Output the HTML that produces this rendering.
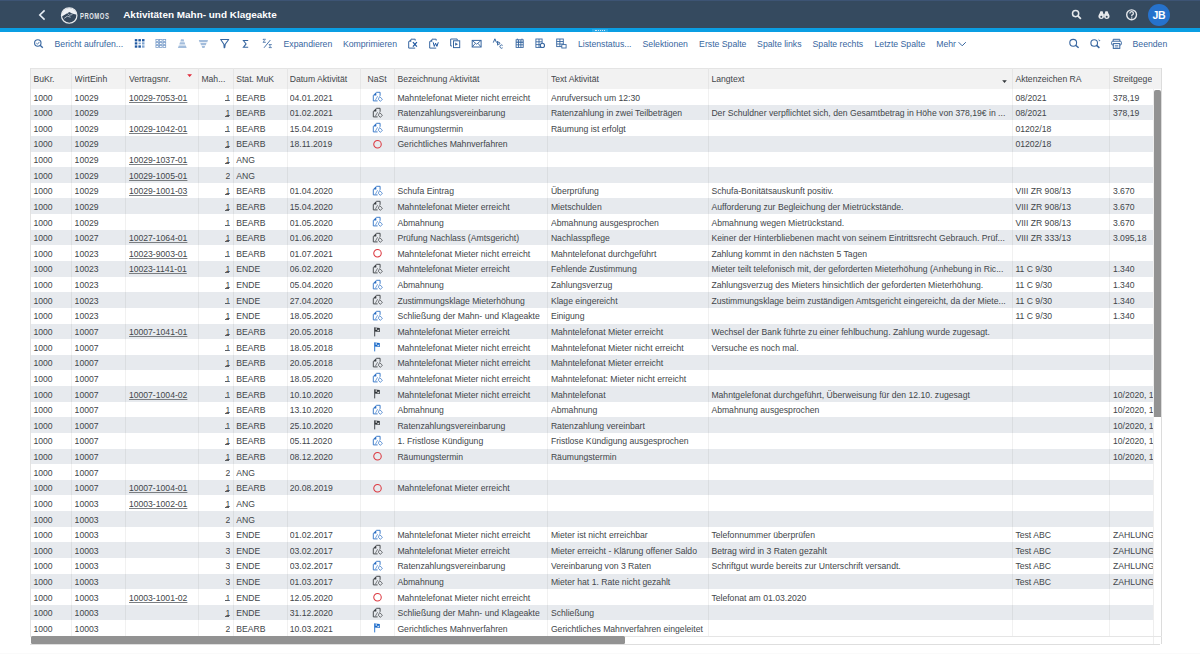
<!DOCTYPE html>
<html><head><meta charset="utf-8"><style>
*{box-sizing:border-box}
html,body{margin:0;padding:0;width:1200px;height:654px;overflow:hidden;background:#fff;font-family:"Liberation Sans",sans-serif}
.abs{position:absolute}
.shell{position:absolute;left:0;top:0;width:1200px;height:28.3px;background:#354a5f}
.bline{position:absolute;left:0;top:28.3px;width:1200px;height:3.7px;background:#0a9ee3}
.tb{position:absolute;top:37px;height:14px;line-height:14px;font-size:8.7px;color:#3766a0;white-space:nowrap}
.hdr{position:absolute;top:68.0px;height:21.05px;background:#f2f2f2;border-top:1px solid #e4e4e4}
.row{position:absolute;height:15.63px}
.cell{position:absolute;white-space:nowrap;overflow:hidden;font-size:8.65px;color:#42464a;line-height:15.63px;padding-top:1.5px}
.ic{position:absolute}
.vl{position:absolute;width:1px;background:#e5e5e5}
u{text-decoration:underline;text-underline-offset:0.6px;text-decoration-thickness:0.7px;text-decoration-color:#7a7e82}
</style></head><body>

<div class="shell"></div><div class="bline"></div><div class="abs" style="left:0;top:0;width:1200px;height:1.2px;background:#3d5474"></div>
<div class="abs" style="left:592px;top:28.6px;width:16px;height:3px;background:#29a9e8"></div>
<div class="abs" style="left:595px;top:29.6px;width:10px;height:1px;border-top:1px dotted #cfe8f8"></div>
<svg class="abs" style="left:36px;top:8px" width="12" height="14" viewBox="0 0 12 14"><path d="M8.6 2.4 L3.8 7 L8.6 11.6" fill="none" stroke="#e8eef5" stroke-width="1.6"/></svg>
<svg class="abs" style="left:0;top:0" width="90" height="28" viewBox="0 0 90 28"><defs><clipPath id="lc"><circle cx="69.2" cy="15.5" r="7.6"/></clipPath></defs><g clip-path="url(#lc)"><rect x="60" y="6" width="20" height="20" fill="#eef1f4"/><path d="M60 17.2 L63.5 15.6 L66.8 13.6 L69.4 12.1 L72 13.6 L75 14.2 L79 15.4 L79 26 L60 26 Z" fill="#34475b"/><path d="M64.2 18.4 L67.2 16.2 L70.6 17.2 M67.4 13.3 L69.4 15.2 L72.4 14.6" fill="none" stroke="#c9d2dc" stroke-width="0.8"/></g><circle cx="69.2" cy="15.5" r="7.75" fill="none" stroke="#e6e9ec" stroke-width="1.2"/></svg>
<div class="abs" style="left:80.2px;top:8.7px;height:14px;line-height:14px;font-size:9.5px;color:#e3e7eb;transform:scaleX(0.62);transform-origin:0 0;letter-spacing:0.85px;font-weight:bold">PROMOS</div>
<div class="abs" style="left:123.2px;top:7.8px;height:14px;line-height:14px;font-size:9.95px;font-weight:bold;color:#fff;white-space:nowrap">Aktivitäten Mahn- und Klageakte</div>
<svg class="abs" style="left:0;top:0" width="1200" height="28" viewBox="0 0 1200 28" ><g fill="none" stroke="#e6e9ec"><circle cx="1075.6" cy="13.6" r="3.1" stroke-width="1.5"/><path d="M1077.9 15.9 L1080.9 18.8" stroke-width="1.8"/><circle cx="1131.6" cy="14.8" r="4.9" stroke-width="1.4"/><path d="M1129.9 13.4 A1.75 1.75 0 1 1 1131.9 15.1 L1131.7 16.3" stroke-width="1.3"/></g><circle cx="1131.7" cy="18" r="0.8" fill="#e6e9ec"/><g fill="#e6e9ec"><circle cx="1101.2" cy="16.2" r="2.7"/><circle cx="1106.8" cy="16.2" r="2.7"/><path d="M1098.8 15.4 L1100.4 11.2 L1102.6 11.2 L1103.6 14.6 L1104.4 14.6 L1105.4 11.2 L1107.6 11.2 L1109.2 15.4 Z"/></g><g fill="#34475b"><circle cx="1101.3" cy="16.8" r="1"/><circle cx="1106.7" cy="16.8" r="1"/></g></svg>
<div class="abs" style="left:1147.5px;top:3.6px;width:22.6px;height:22.6px;border-radius:50%;background:#2672cc;color:#fff;font-weight:bold;font-size:10.5px;line-height:22.6px;text-align:center;letter-spacing:-0.3px">JB</div>

<div class="tb" style="left:54.5px">Bericht aufrufen...</div>
<div class="tb" style="left:283.5px">Expandieren</div>
<div class="tb" style="left:342.9px">Komprimieren</div>
<div class="tb" style="left:577.9px">Listenstatus...</div>
<div class="tb" style="left:642.5px">Selektionen</div>
<div class="tb" style="left:699.1px">Erste Spalte</div>
<div class="tb" style="left:757.1px">Spalte links</div>
<div class="tb" style="left:812.5px">Spalte rechts</div>
<div class="tb" style="left:874.5px">Letzte Spalte</div>
<div class="tb" style="left:936.2px">Mehr</div>
<div class="tb" style="left:1132.5px">Beenden</div>

<svg class="abs" style="left:0;top:0" width="1200" height="60" viewBox="0 0 1200 60">
<g fill="none" stroke="#3766a0" stroke-width="1.1">
<circle cx="37.8" cy="43" r="3.2"/><path d="M40.1 45.3 L42.8 47.8" stroke-width="1.4"/><path d="M36.3 43.1 L37.5 44.2 L39.4 41.9" stroke-width="0.85"/>
</g>
<g fill="#1f57a0"><rect x="134.8" y="39.1" width="2.5" height="2.3"/><rect x="138.4" y="39.1" width="2.5" height="2.3"/><rect x="142" y="39.1" width="2.5" height="2.3"/><rect x="134.8" y="42.3" width="2.5" height="2.2"/><rect x="134.8" y="45.4" width="2.5" height="2.3"/><rect x="138.4" y="45.4" width="2.5" height="2.3"/></g>
<g fill="#7ea3cf"><rect x="138.6" y="42.6" width="2.2" height="1.6"/><rect x="142" y="42.3" width="2.5" height="2.2"/><rect x="142" y="45.4" width="2.5" height="2.3"/></g>
<g fill="none" stroke="#7c9fcb" stroke-width="0.8"><rect x="155.9" y="39.4" width="2.6" height="2"/><rect x="159.5" y="39.4" width="2.6" height="2"/><rect x="163.1" y="39.4" width="2.6" height="2"/><rect x="155.9" y="42.4" width="2.6" height="2"/><rect x="159.5" y="42.4" width="2.6" height="2"/><rect x="163.1" y="42.4" width="2.6" height="2"/><rect x="155.9" y="45.4" width="2.6" height="2"/><rect x="159.5" y="45.4" width="2.6" height="2"/><rect x="163.1" y="45.4" width="2.6" height="2"/></g>
<g fill="#a3bddc"><path d="M181 39.2 h2.6 l0.6 2.2 h-3.8z"/><path d="M180 42.2 h4.6 l0.7 2.4 h-6z"/><path d="M178.8 45.4 h7 l0.9 2.5 h-8.8z"/></g>
<g fill="#a3bddc"><path d="M198.8 40 h9.2 l-0.7 2.2 h-7.8z"/><path d="M200.3 43 h6.2 l-0.7 2.2 h-4.8z"/><path d="M201.7 46 h3.4 l-0.6 2 h-2.2z"/></g>
<path d="M220.7 39.5 H228.7 L225.2 44.3 L224.7 47.6 L224.2 47.6 L223.9 44.3 Z" fill="none" stroke="#3766a0" stroke-width="1.1" stroke-linejoin="round"/>
<path d="M248.2 40.5 H243.4 L246.1 43.9 L243.4 47.3 H248.2" fill="none" stroke="#3766a0" stroke-width="1.05"/>
<path d="M265.8 39.3 H263 L264.5 40.8 L263 42.3 H265.8" fill="none" stroke="#3766a0" stroke-width="0.8"/>
<path d="M264 47.8 L270.4 40" fill="none" stroke="#3766a0" stroke-width="0.9"/>
<path d="M271.8 44.6 H269 L270.5 46.1 L269 47.6 H271.8" fill="none" stroke="#3766a0" stroke-width="0.8"/>
<g fill="none" stroke="#3766a0" stroke-width="1">
<path d="M408.7 41.5 V48.1 H415.2"/><path d="M411 39.2 H415.2 V40.6"/>
<path d="M429.7 41.5 V48.1 H436.2"/><path d="M432 39.2 H436.2 V40.6"/>
</g>
<path d="M408.2 41.8 L411.3 38.7 L411.3 41.8 Z" fill="#3766a0"/>
<path d="M429.2 41.8 L432.3 38.7 L432.3 41.8 Z" fill="#3766a0"/>
<path d="M412.9 42.1 L416.9 46.6 M416.9 42.1 L412.9 46.6" stroke="#1f57a0" stroke-width="1.2"/>
<path d="M433.2 42.3 L434.3 46.4 L435.6 43.2 L436.9 46.4 L438.3 42.3" fill="none" stroke="#1f57a0" stroke-width="1"/>
<g fill="none" stroke="#3766a0" stroke-width="1">
<path d="M452 46 H450.7 V39 H457.2 V40.3"/><rect x="453.5" y="40.8" width="6.2" height="6.8"/>
</g>
<path d="M455.2 42.6 L458 44.2 L455.2 45.8 Z" fill="#3766a0"/>
<g fill="none" stroke="#3766a0" stroke-width="1">
<rect x="472.2" y="40.4" width="8.9" height="6.6"/><path d="M472.4 40.6 L476.65 44.2 L480.9 40.6 M472.4 46.8 L475.3 43.4 M480.9 46.8 L478 43.4" stroke-width="0.9"/>
</g>
<g fill="none" stroke="#3766a0" stroke-width="1">
<path d="M493.3 42.6 L494.9 38.8 L496.5 42.6"/><path d="M497.6 41 V45.4 M497.6 43.3 a1.1 1.1 0 1 1 2.2 0 a1.1 1.1 0 1 1 -2.2 0"/><path d="M502.6 45.4 a1.6 1.6 0 1 0 0 2.4"/>
</g>
<g fill="none" stroke="#3766a0" stroke-width="0.9">
<rect x="516.1" y="39.8" width="7.1" height="7.6"/><path d="M516.1 42.2 H523.2" stroke-width="1.3"/><path d="M516.1 44.8 H523.2 M518.5 39.8 V47.4 M520.9 39.8 V47.4"/><path d="M517.3 38.6 V40 M522 38.6 V40"/>
</g>
<g fill="none" stroke="#3766a0" stroke-width="0.9">
<rect x="535.9" y="39" width="6.2" height="8.4"/><path d="M535.9 41.8 H542.1 M535.9 44.6 H542.1 M539 39 V47.4"/>
</g>
<circle cx="542.4" cy="45.4" r="2.1" fill="#fff" stroke="#3766a0" stroke-width="1.1"/>
<g fill="none" stroke="#3766a0" stroke-width="0.9">
<rect x="556.7" y="39" width="6.6" height="7.6"/><path d="M556.7 41.5 H563.3 M556.7 44 H563.3 M559.9 39 V46.6"/>
</g>
<rect x="561.8" y="44.6" width="4.3" height="3.4" fill="#fff" stroke="#3766a0" stroke-width="0.9"/>
<path d="M958.6 42.2 L962.2 45.8 L965.8 42.2" fill="none" stroke="#3766a0" stroke-width="1"/>
<g fill="none" stroke="#3766a0" stroke-width="1.1">
<circle cx="1073.2" cy="42.8" r="3.4"/><path d="M1075.6 45.2 L1078.6 47.8" stroke-width="1.5"/>
<circle cx="1094.2" cy="43" r="3.3"/><path d="M1096.6 45.4 L1099.4 47.9" stroke-width="1.5"/>
</g>
<path d="M1098.6 38.6 L1099.4 40.3 L1100.6 40.3 L1098.9 41.6 Z" fill="#3766a0"/>
<g fill="none" stroke="#3766a0" stroke-width="1">
<path d="M1113.2 41.2 V39.3 H1119.8 V41.2"/><rect x="1111.6" y="41.2" width="9.8" height="3.8" rx="1.2"/><rect x="1113.3" y="43.6" width="6.5" height="4.8" fill="#fff"/>
</g>
<path d="M1114.8 45.6 h3.5 M1114.8 47 h3.5" stroke="#3766a0" stroke-width="0.7"/>
</svg>

<div class="hdr" style="left:30px;width:1131.5px"></div>
<div class="cell" style="left:33.4px;top:67.6px;width:36.800000000000004px;line-height:21.05px;color:#42464a">BuKr.</div>
<div class="cell" style="left:74.60000000000001px;top:67.6px;width:49.9px;line-height:21.05px;color:#42464a">WirtEinh</div>
<div class="cell" style="left:128.9px;top:67.6px;width:68.1px;line-height:21.05px;color:#42464a">Vertragsnr.</div>
<div class="cell" style="left:201.4px;top:67.6px;width:31.1px;line-height:21.05px;color:#42464a">Mah...</div>
<div class="cell" style="left:236.20000000000002px;top:67.6px;width:49.1px;line-height:21.05px;color:#42464a">Stat. MuK</div>
<div class="cell" style="left:289.7px;top:67.6px;width:68.6px;line-height:21.05px;color:#42464a">Datum Aktivität</div>
<div class="cell" style="left:360px;top:67.6px;width:34px;line-height:21.05px;text-align:center;color:#42464a">NaSt</div>
<div class="cell" style="left:397.4px;top:67.6px;width:149.1px;line-height:21.05px;color:#42464a">Bezeichnung Aktivität</div>
<div class="cell" style="left:550.9px;top:67.6px;width:156.1px;line-height:21.05px;color:#42464a">Text Aktivität</div>
<div class="cell" style="left:711.4px;top:67.6px;width:299.6px;line-height:21.05px;color:#42464a">Langtext</div>
<div class="cell" style="left:1015.4px;top:67.6px;width:93.1px;line-height:21.05px;color:#42464a">Aktenzeichen RA</div>
<div class="cell" style="left:1112.9px;top:67.6px;width:39.6px;line-height:21.05px;color:#42464a">Streitgegen</div>
<div class="vl" style="left:70.7px;top:68.0px;height:21.05px;background:#e6e6e6"></div>
<div class="vl" style="left:125.0px;top:68.0px;height:21.05px;background:#e6e6e6"></div>
<div class="vl" style="left:197.5px;top:68.0px;height:21.05px;background:#e6e6e6"></div>
<div class="vl" style="left:233.0px;top:68.0px;height:21.05px;background:#e6e6e6"></div>
<div class="vl" style="left:286.5px;top:68.0px;height:21.05px;background:#e6e6e6"></div>
<div class="vl" style="left:359.5px;top:68.0px;height:21.05px;background:#e6e6e6"></div>
<div class="vl" style="left:393.5px;top:68.0px;height:21.05px;background:#e6e6e6"></div>
<div class="vl" style="left:547.0px;top:68.0px;height:21.05px;background:#e6e6e6"></div>
<div class="vl" style="left:707.5px;top:68.0px;height:21.05px;background:#e6e6e6"></div>
<div class="vl" style="left:1011.5px;top:68.0px;height:21.05px;background:#e6e6e6"></div>
<div class="vl" style="left:1109.0px;top:68.0px;height:21.05px;background:#e6e6e6"></div>
<svg class="abs" style="left:187.2px;top:74px" width="6" height="4" viewBox="0 0 6 4"><path d="M0.2 0.3 L5 0.3 L2.6 2.9Z" fill="#e0293a"/></svg>
<svg class="abs" style="left:1001.5px;top:80.2px" width="6" height="4" viewBox="0 0 6 4"><path d="M0.2 0.3 L4.8 0.3 L2.5 3Z" fill="#32363a"/></svg>
<div class="row" style="left:30px;top:89.05px;width:1123.5px;background:#ffffff">
<div class="cell" style="left:3.4px;top:0;width:36.800000000000004px">1000</div>
<div class="cell" style="left:44.6px;top:0;width:49.9px">10029</div>
<div class="cell" style="left:98.9px;top:0;width:68.1px"><u>10029-7053-01</u></div>
<div class="cell" style="left:168px;top:0;width:32.2px;text-align:right">1</div>
<div class="abs" style="left:195.1px;top:11.1px;width:3.5px;height:0.75px;background:#5a5e62"></div>
<div class="cell" style="left:206.20000000000002px;top:0;width:49.1px">BEARB</div>
<div class="cell" style="left:259.7px;top:0;width:68.6px">04.01.2021</div>
<div class="abs" style="left:330px;top:0;width:34px;height:15.63px"><svg class="ic" width="12" height="12" viewBox="0 0 12 12" style="left:11.5px;top:1.9px"><path d="M0.8 4.4 L4.3 0.9 L4.3 4.4 Z" fill="#2b6fc4"/><path d="M4.3 1.3 H8.1 V4.8 M1.3 4.4 V9.9 H5.6" fill="none" stroke="#2b6fc4" stroke-width="0.9"/><path d="M3.4 9.2 L5.6 5.2" fill="none" stroke="#2b6fc4" stroke-width="0.8" opacity="0.8"/><path d="M7.6 5.6 L10.4 8.2 L8.4 10.4 L6.3 8.2 Z" fill="none" stroke="#2b6fc4" stroke-width="0.85" opacity="0.85"/></svg></div>
<div class="cell" style="left:367.4px;top:0;width:149.1px">Mahntelefonat Mieter nicht erreicht</div>
<div class="cell" style="left:520.9px;top:0;width:156.1px">Anrufversuch um 12:30</div>
<div class="cell" style="left:985.4px;top:0;width:93.1px">08/2021</div>
<div class="cell" style="left:1082.9px;top:0;width:40.6px">378,19</div>
</div>
<div class="row" style="left:30px;top:104.67999999999999px;width:1123.5px;background:#e7eaee">
<div class="cell" style="left:3.4px;top:0;width:36.800000000000004px">1000</div>
<div class="cell" style="left:44.6px;top:0;width:49.9px">10029</div>
<div class="cell" style="left:168px;top:0;width:32.2px;text-align:right">1</div>
<div class="abs" style="left:195.1px;top:11.1px;width:3.5px;height:0.75px;background:#5a5e62"></div>
<div class="cell" style="left:206.20000000000002px;top:0;width:49.1px">BEARB</div>
<div class="cell" style="left:259.7px;top:0;width:68.6px">01.02.2021</div>
<div class="abs" style="left:330px;top:0;width:34px;height:15.63px"><svg class="ic" width="12" height="12" viewBox="0 0 12 12" style="left:11.5px;top:1.9px"><path d="M0.8 4.4 L4.3 0.9 L4.3 4.4 Z" fill="#3a3e42"/><path d="M4.3 1.3 H8.1 V4.8 M1.3 4.4 V9.9 H5.6" fill="none" stroke="#3a3e42" stroke-width="0.9"/><path d="M3.4 9.2 L5.6 5.2" fill="none" stroke="#3a3e42" stroke-width="0.8" opacity="0.8"/><path d="M7.6 5.6 L10.4 8.2 L8.4 10.4 L6.3 8.2 Z" fill="none" stroke="#3a3e42" stroke-width="0.85" opacity="0.85"/></svg></div>
<div class="cell" style="left:367.4px;top:0;width:149.1px">Ratenzahlungsvereinbarung</div>
<div class="cell" style="left:520.9px;top:0;width:156.1px">Ratenzahlung in zwei Teilbeträgen</div>
<div class="cell" style="left:681.4px;top:0;width:299.6px">Der Schuldner verpflichtet sich, den Gesamtbetrag in Höhe von 378,19€ in ...</div>
<div class="cell" style="left:985.4px;top:0;width:93.1px">08/2021</div>
<div class="cell" style="left:1082.9px;top:0;width:40.6px">378,19</div>
</div>
<div class="row" style="left:30px;top:120.31px;width:1123.5px;background:#ffffff">
<div class="cell" style="left:3.4px;top:0;width:36.800000000000004px">1000</div>
<div class="cell" style="left:44.6px;top:0;width:49.9px">10029</div>
<div class="cell" style="left:98.9px;top:0;width:68.1px"><u>10029-1042-01</u></div>
<div class="cell" style="left:168px;top:0;width:32.2px;text-align:right">1</div>
<div class="abs" style="left:195.1px;top:11.1px;width:3.5px;height:0.75px;background:#5a5e62"></div>
<div class="cell" style="left:206.20000000000002px;top:0;width:49.1px">BEARB</div>
<div class="cell" style="left:259.7px;top:0;width:68.6px">15.04.2019</div>
<div class="abs" style="left:330px;top:0;width:34px;height:15.63px"><svg class="ic" width="12" height="12" viewBox="0 0 12 12" style="left:11.5px;top:1.9px"><path d="M0.8 4.4 L4.3 0.9 L4.3 4.4 Z" fill="#2b6fc4"/><path d="M4.3 1.3 H8.1 V4.8 M1.3 4.4 V9.9 H5.6" fill="none" stroke="#2b6fc4" stroke-width="0.9"/><path d="M3.4 9.2 L5.6 5.2" fill="none" stroke="#2b6fc4" stroke-width="0.8" opacity="0.8"/><path d="M7.6 5.6 L10.4 8.2 L8.4 10.4 L6.3 8.2 Z" fill="none" stroke="#2b6fc4" stroke-width="0.85" opacity="0.85"/></svg></div>
<div class="cell" style="left:367.4px;top:0;width:149.1px">Räumungstermin</div>
<div class="cell" style="left:520.9px;top:0;width:156.1px">Räumung ist erfolgt</div>
<div class="cell" style="left:985.4px;top:0;width:93.1px">01202/18</div>
</div>
<div class="row" style="left:30px;top:135.94px;width:1123.5px;background:#e7eaee">
<div class="cell" style="left:3.4px;top:0;width:36.800000000000004px">1000</div>
<div class="cell" style="left:44.6px;top:0;width:49.9px">10029</div>
<div class="cell" style="left:168px;top:0;width:32.2px;text-align:right">1</div>
<div class="abs" style="left:195.1px;top:11.1px;width:3.5px;height:0.75px;background:#5a5e62"></div>
<div class="cell" style="left:206.20000000000002px;top:0;width:49.1px">BEARB</div>
<div class="cell" style="left:259.7px;top:0;width:68.6px">18.11.2019</div>
<div class="abs" style="left:330px;top:0;width:34px;height:15.63px"><svg class="ic" width="12" height="12" viewBox="0 0 12 12" style="left:11px;top:1.8px"><circle cx="6.5" cy="6.2" r="3.75" fill="none" stroke="#dc3a42" stroke-width="1.05"/></svg></div>
<div class="cell" style="left:367.4px;top:0;width:149.1px">Gerichtliches Mahnverfahren</div>
<div class="cell" style="left:985.4px;top:0;width:93.1px">01202/18</div>
</div>
<div class="row" style="left:30px;top:151.57px;width:1123.5px;background:#ffffff">
<div class="cell" style="left:3.4px;top:0;width:36.800000000000004px">1000</div>
<div class="cell" style="left:44.6px;top:0;width:49.9px">10029</div>
<div class="cell" style="left:98.9px;top:0;width:68.1px"><u>10029-1037-01</u></div>
<div class="cell" style="left:168px;top:0;width:32.2px;text-align:right">1</div>
<div class="abs" style="left:195.1px;top:11.1px;width:3.5px;height:0.75px;background:#5a5e62"></div>
<div class="cell" style="left:206.20000000000002px;top:0;width:49.1px">ANG</div>
</div>
<div class="row" style="left:30px;top:167.2px;width:1123.5px;background:#e7eaee">
<div class="cell" style="left:3.4px;top:0;width:36.800000000000004px">1000</div>
<div class="cell" style="left:44.6px;top:0;width:49.9px">10029</div>
<div class="cell" style="left:98.9px;top:0;width:68.1px"><u>10029-1005-01</u></div>
<div class="cell" style="left:168px;top:0;width:32.2px;text-align:right">2</div>
<div class="cell" style="left:206.20000000000002px;top:0;width:49.1px">ANG</div>
</div>
<div class="row" style="left:30px;top:182.82999999999998px;width:1123.5px;background:#ffffff">
<div class="cell" style="left:3.4px;top:0;width:36.800000000000004px">1000</div>
<div class="cell" style="left:44.6px;top:0;width:49.9px">10029</div>
<div class="cell" style="left:98.9px;top:0;width:68.1px"><u>10029-1001-03</u></div>
<div class="cell" style="left:168px;top:0;width:32.2px;text-align:right">1</div>
<div class="abs" style="left:195.1px;top:11.1px;width:3.5px;height:0.75px;background:#5a5e62"></div>
<div class="cell" style="left:206.20000000000002px;top:0;width:49.1px">BEARB</div>
<div class="cell" style="left:259.7px;top:0;width:68.6px">01.04.2020</div>
<div class="abs" style="left:330px;top:0;width:34px;height:15.63px"><svg class="ic" width="12" height="12" viewBox="0 0 12 12" style="left:11.5px;top:1.9px"><path d="M0.8 4.4 L4.3 0.9 L4.3 4.4 Z" fill="#2b6fc4"/><path d="M4.3 1.3 H8.1 V4.8 M1.3 4.4 V9.9 H5.6" fill="none" stroke="#2b6fc4" stroke-width="0.9"/><path d="M3.4 9.2 L5.6 5.2" fill="none" stroke="#2b6fc4" stroke-width="0.8" opacity="0.8"/><path d="M7.6 5.6 L10.4 8.2 L8.4 10.4 L6.3 8.2 Z" fill="none" stroke="#2b6fc4" stroke-width="0.85" opacity="0.85"/></svg></div>
<div class="cell" style="left:367.4px;top:0;width:149.1px">Schufa Eintrag</div>
<div class="cell" style="left:520.9px;top:0;width:156.1px">Überprüfung</div>
<div class="cell" style="left:681.4px;top:0;width:299.6px">Schufa-Bonitätsauskunft positiv.</div>
<div class="cell" style="left:985.4px;top:0;width:93.1px">VIII ZR 908/13</div>
<div class="cell" style="left:1082.9px;top:0;width:40.6px">3.670</div>
</div>
<div class="row" style="left:30px;top:198.46px;width:1123.5px;background:#e7eaee">
<div class="cell" style="left:3.4px;top:0;width:36.800000000000004px">1000</div>
<div class="cell" style="left:44.6px;top:0;width:49.9px">10029</div>
<div class="cell" style="left:168px;top:0;width:32.2px;text-align:right">1</div>
<div class="abs" style="left:195.1px;top:11.1px;width:3.5px;height:0.75px;background:#5a5e62"></div>
<div class="cell" style="left:206.20000000000002px;top:0;width:49.1px">BEARB</div>
<div class="cell" style="left:259.7px;top:0;width:68.6px">15.04.2020</div>
<div class="abs" style="left:330px;top:0;width:34px;height:15.63px"><svg class="ic" width="12" height="12" viewBox="0 0 12 12" style="left:11.5px;top:1.9px"><path d="M0.8 4.4 L4.3 0.9 L4.3 4.4 Z" fill="#3a3e42"/><path d="M4.3 1.3 H8.1 V4.8 M1.3 4.4 V9.9 H5.6" fill="none" stroke="#3a3e42" stroke-width="0.9"/><path d="M3.4 9.2 L5.6 5.2" fill="none" stroke="#3a3e42" stroke-width="0.8" opacity="0.8"/><path d="M7.6 5.6 L10.4 8.2 L8.4 10.4 L6.3 8.2 Z" fill="none" stroke="#3a3e42" stroke-width="0.85" opacity="0.85"/></svg></div>
<div class="cell" style="left:367.4px;top:0;width:149.1px">Mahntelefonat Mieter erreicht</div>
<div class="cell" style="left:520.9px;top:0;width:156.1px">Mietschulden</div>
<div class="cell" style="left:681.4px;top:0;width:299.6px">Aufforderung zur Begleichung der Mietrückstände.</div>
<div class="cell" style="left:985.4px;top:0;width:93.1px">VIII ZR 908/13</div>
<div class="cell" style="left:1082.9px;top:0;width:40.6px">3.670</div>
</div>
<div class="row" style="left:30px;top:214.09px;width:1123.5px;background:#ffffff">
<div class="cell" style="left:3.4px;top:0;width:36.800000000000004px">1000</div>
<div class="cell" style="left:44.6px;top:0;width:49.9px">10029</div>
<div class="cell" style="left:168px;top:0;width:32.2px;text-align:right">1</div>
<div class="abs" style="left:195.1px;top:11.1px;width:3.5px;height:0.75px;background:#5a5e62"></div>
<div class="cell" style="left:206.20000000000002px;top:0;width:49.1px">BEARB</div>
<div class="cell" style="left:259.7px;top:0;width:68.6px">01.05.2020</div>
<div class="abs" style="left:330px;top:0;width:34px;height:15.63px"><svg class="ic" width="12" height="12" viewBox="0 0 12 12" style="left:11.5px;top:1.9px"><path d="M0.8 4.4 L4.3 0.9 L4.3 4.4 Z" fill="#2b6fc4"/><path d="M4.3 1.3 H8.1 V4.8 M1.3 4.4 V9.9 H5.6" fill="none" stroke="#2b6fc4" stroke-width="0.9"/><path d="M3.4 9.2 L5.6 5.2" fill="none" stroke="#2b6fc4" stroke-width="0.8" opacity="0.8"/><path d="M7.6 5.6 L10.4 8.2 L8.4 10.4 L6.3 8.2 Z" fill="none" stroke="#2b6fc4" stroke-width="0.85" opacity="0.85"/></svg></div>
<div class="cell" style="left:367.4px;top:0;width:149.1px">Abmahnung</div>
<div class="cell" style="left:520.9px;top:0;width:156.1px">Abmahnung ausgesprochen</div>
<div class="cell" style="left:681.4px;top:0;width:299.6px">Abmahnung wegen Mietrückstand.</div>
<div class="cell" style="left:985.4px;top:0;width:93.1px">VIII ZR 908/13</div>
<div class="cell" style="left:1082.9px;top:0;width:40.6px">3.670</div>
</div>
<div class="row" style="left:30px;top:229.72000000000003px;width:1123.5px;background:#e7eaee">
<div class="cell" style="left:3.4px;top:0;width:36.800000000000004px">1000</div>
<div class="cell" style="left:44.6px;top:0;width:49.9px">10027</div>
<div class="cell" style="left:98.9px;top:0;width:68.1px"><u>10027-1064-01</u></div>
<div class="cell" style="left:168px;top:0;width:32.2px;text-align:right">1</div>
<div class="abs" style="left:195.1px;top:11.1px;width:3.5px;height:0.75px;background:#5a5e62"></div>
<div class="cell" style="left:206.20000000000002px;top:0;width:49.1px">BEARB</div>
<div class="cell" style="left:259.7px;top:0;width:68.6px">01.06.2020</div>
<div class="abs" style="left:330px;top:0;width:34px;height:15.63px"><svg class="ic" width="12" height="12" viewBox="0 0 12 12" style="left:11.5px;top:1.9px"><path d="M0.8 4.4 L4.3 0.9 L4.3 4.4 Z" fill="#3a3e42"/><path d="M4.3 1.3 H8.1 V4.8 M1.3 4.4 V9.9 H5.6" fill="none" stroke="#3a3e42" stroke-width="0.9"/><path d="M3.4 9.2 L5.6 5.2" fill="none" stroke="#3a3e42" stroke-width="0.8" opacity="0.8"/><path d="M7.6 5.6 L10.4 8.2 L8.4 10.4 L6.3 8.2 Z" fill="none" stroke="#3a3e42" stroke-width="0.85" opacity="0.85"/></svg></div>
<div class="cell" style="left:367.4px;top:0;width:149.1px">Prüfung Nachlass (Amtsgericht)</div>
<div class="cell" style="left:520.9px;top:0;width:156.1px">Nachlasspflege</div>
<div class="cell" style="left:681.4px;top:0;width:299.6px">Keiner der Hinterbliebenen macht von seinem Eintrittsrecht Gebrauch. Prüf...</div>
<div class="cell" style="left:985.4px;top:0;width:93.1px">VIII ZR 333/13</div>
<div class="cell" style="left:1082.9px;top:0;width:40.6px">3.095,18</div>
</div>
<div class="row" style="left:30px;top:245.35000000000002px;width:1123.5px;background:#ffffff">
<div class="cell" style="left:3.4px;top:0;width:36.800000000000004px">1000</div>
<div class="cell" style="left:44.6px;top:0;width:49.9px">10023</div>
<div class="cell" style="left:98.9px;top:0;width:68.1px"><u>10023-9003-01</u></div>
<div class="cell" style="left:168px;top:0;width:32.2px;text-align:right">1</div>
<div class="abs" style="left:195.1px;top:11.1px;width:3.5px;height:0.75px;background:#5a5e62"></div>
<div class="cell" style="left:206.20000000000002px;top:0;width:49.1px">BEARB</div>
<div class="cell" style="left:259.7px;top:0;width:68.6px">01.07.2021</div>
<div class="abs" style="left:330px;top:0;width:34px;height:15.63px"><svg class="ic" width="12" height="12" viewBox="0 0 12 12" style="left:11px;top:1.8px"><circle cx="6.5" cy="6.2" r="3.75" fill="none" stroke="#dc3a42" stroke-width="1.05"/></svg></div>
<div class="cell" style="left:367.4px;top:0;width:149.1px">Mahntelefonat Mieter nicht erreicht</div>
<div class="cell" style="left:520.9px;top:0;width:156.1px">Mahntelefonat durchgeführt</div>
<div class="cell" style="left:681.4px;top:0;width:299.6px">Zahlung kommt in den nächsten 5 Tagen</div>
</div>
<div class="row" style="left:30px;top:260.98px;width:1123.5px;background:#e7eaee">
<div class="cell" style="left:3.4px;top:0;width:36.800000000000004px">1000</div>
<div class="cell" style="left:44.6px;top:0;width:49.9px">10023</div>
<div class="cell" style="left:98.9px;top:0;width:68.1px"><u>10023-1141-01</u></div>
<div class="cell" style="left:168px;top:0;width:32.2px;text-align:right">1</div>
<div class="abs" style="left:195.1px;top:11.1px;width:3.5px;height:0.75px;background:#5a5e62"></div>
<div class="cell" style="left:206.20000000000002px;top:0;width:49.1px">ENDE</div>
<div class="cell" style="left:259.7px;top:0;width:68.6px">06.02.2020</div>
<div class="abs" style="left:330px;top:0;width:34px;height:15.63px"><svg class="ic" width="12" height="12" viewBox="0 0 12 12" style="left:11.5px;top:1.9px"><path d="M0.8 4.4 L4.3 0.9 L4.3 4.4 Z" fill="#3a3e42"/><path d="M4.3 1.3 H8.1 V4.8 M1.3 4.4 V9.9 H5.6" fill="none" stroke="#3a3e42" stroke-width="0.9"/><path d="M3.4 9.2 L5.6 5.2" fill="none" stroke="#3a3e42" stroke-width="0.8" opacity="0.8"/><path d="M7.6 5.6 L10.4 8.2 L8.4 10.4 L6.3 8.2 Z" fill="none" stroke="#3a3e42" stroke-width="0.85" opacity="0.85"/></svg></div>
<div class="cell" style="left:367.4px;top:0;width:149.1px">Mahntelefonat Mieter erreicht</div>
<div class="cell" style="left:520.9px;top:0;width:156.1px">Fehlende Zustimmung</div>
<div class="cell" style="left:681.4px;top:0;width:299.6px">Mieter teilt telefonisch mit, der geforderten Mieterhöhung (Anhebung in Ric...</div>
<div class="cell" style="left:985.4px;top:0;width:93.1px">11 C 9/30</div>
<div class="cell" style="left:1082.9px;top:0;width:40.6px">1.340</div>
</div>
<div class="row" style="left:30px;top:276.61px;width:1123.5px;background:#ffffff">
<div class="cell" style="left:3.4px;top:0;width:36.800000000000004px">1000</div>
<div class="cell" style="left:44.6px;top:0;width:49.9px">10023</div>
<div class="cell" style="left:168px;top:0;width:32.2px;text-align:right">1</div>
<div class="abs" style="left:195.1px;top:11.1px;width:3.5px;height:0.75px;background:#5a5e62"></div>
<div class="cell" style="left:206.20000000000002px;top:0;width:49.1px">ENDE</div>
<div class="cell" style="left:259.7px;top:0;width:68.6px">05.04.2020</div>
<div class="abs" style="left:330px;top:0;width:34px;height:15.63px"><svg class="ic" width="12" height="12" viewBox="0 0 12 12" style="left:11.5px;top:1.9px"><path d="M0.8 4.4 L4.3 0.9 L4.3 4.4 Z" fill="#2b6fc4"/><path d="M4.3 1.3 H8.1 V4.8 M1.3 4.4 V9.9 H5.6" fill="none" stroke="#2b6fc4" stroke-width="0.9"/><path d="M3.4 9.2 L5.6 5.2" fill="none" stroke="#2b6fc4" stroke-width="0.8" opacity="0.8"/><path d="M7.6 5.6 L10.4 8.2 L8.4 10.4 L6.3 8.2 Z" fill="none" stroke="#2b6fc4" stroke-width="0.85" opacity="0.85"/></svg></div>
<div class="cell" style="left:367.4px;top:0;width:149.1px">Abmahnung</div>
<div class="cell" style="left:520.9px;top:0;width:156.1px">Zahlungsverzug</div>
<div class="cell" style="left:681.4px;top:0;width:299.6px">Zahlungsverzug des Mieters hinsichtlich der geforderten Mieterhöhung.</div>
<div class="cell" style="left:985.4px;top:0;width:93.1px">11 C 9/30</div>
<div class="cell" style="left:1082.9px;top:0;width:40.6px">1.340</div>
</div>
<div class="row" style="left:30px;top:292.24px;width:1123.5px;background:#e7eaee">
<div class="cell" style="left:3.4px;top:0;width:36.800000000000004px">1000</div>
<div class="cell" style="left:44.6px;top:0;width:49.9px">10023</div>
<div class="cell" style="left:168px;top:0;width:32.2px;text-align:right">1</div>
<div class="abs" style="left:195.1px;top:11.1px;width:3.5px;height:0.75px;background:#5a5e62"></div>
<div class="cell" style="left:206.20000000000002px;top:0;width:49.1px">ENDE</div>
<div class="cell" style="left:259.7px;top:0;width:68.6px">27.04.2020</div>
<div class="abs" style="left:330px;top:0;width:34px;height:15.63px"><svg class="ic" width="12" height="12" viewBox="0 0 12 12" style="left:11.5px;top:1.9px"><path d="M0.8 4.4 L4.3 0.9 L4.3 4.4 Z" fill="#3a3e42"/><path d="M4.3 1.3 H8.1 V4.8 M1.3 4.4 V9.9 H5.6" fill="none" stroke="#3a3e42" stroke-width="0.9"/><path d="M3.4 9.2 L5.6 5.2" fill="none" stroke="#3a3e42" stroke-width="0.8" opacity="0.8"/><path d="M7.6 5.6 L10.4 8.2 L8.4 10.4 L6.3 8.2 Z" fill="none" stroke="#3a3e42" stroke-width="0.85" opacity="0.85"/></svg></div>
<div class="cell" style="left:367.4px;top:0;width:149.1px">Zustimmungsklage Mieterhöhung</div>
<div class="cell" style="left:520.9px;top:0;width:156.1px">Klage eingereicht</div>
<div class="cell" style="left:681.4px;top:0;width:299.6px">Zustimmungsklage beim zuständigen Amtsgericht eingereicht, da der Miete...</div>
<div class="cell" style="left:985.4px;top:0;width:93.1px">11 C 9/30</div>
<div class="cell" style="left:1082.9px;top:0;width:40.6px">1.340</div>
</div>
<div class="row" style="left:30px;top:307.87px;width:1123.5px;background:#ffffff">
<div class="cell" style="left:3.4px;top:0;width:36.800000000000004px">1000</div>
<div class="cell" style="left:44.6px;top:0;width:49.9px">10023</div>
<div class="cell" style="left:168px;top:0;width:32.2px;text-align:right">1</div>
<div class="abs" style="left:195.1px;top:11.1px;width:3.5px;height:0.75px;background:#5a5e62"></div>
<div class="cell" style="left:206.20000000000002px;top:0;width:49.1px">ENDE</div>
<div class="cell" style="left:259.7px;top:0;width:68.6px">18.05.2020</div>
<div class="abs" style="left:330px;top:0;width:34px;height:15.63px"><svg class="ic" width="12" height="12" viewBox="0 0 12 12" style="left:11.5px;top:1.9px"><path d="M0.8 4.4 L4.3 0.9 L4.3 4.4 Z" fill="#2b6fc4"/><path d="M4.3 1.3 H8.1 V4.8 M1.3 4.4 V9.9 H5.6" fill="none" stroke="#2b6fc4" stroke-width="0.9"/><path d="M3.4 9.2 L5.6 5.2" fill="none" stroke="#2b6fc4" stroke-width="0.8" opacity="0.8"/><path d="M7.6 5.6 L10.4 8.2 L8.4 10.4 L6.3 8.2 Z" fill="none" stroke="#2b6fc4" stroke-width="0.85" opacity="0.85"/></svg></div>
<div class="cell" style="left:367.4px;top:0;width:149.1px">Schließung der Mahn- und Klageakte</div>
<div class="cell" style="left:520.9px;top:0;width:156.1px">Einigung</div>
<div class="cell" style="left:985.4px;top:0;width:93.1px">11 C 9/30</div>
<div class="cell" style="left:1082.9px;top:0;width:40.6px">1.340</div>
</div>
<div class="row" style="left:30px;top:323.5px;width:1123.5px;background:#e7eaee">
<div class="cell" style="left:3.4px;top:0;width:36.800000000000004px">1000</div>
<div class="cell" style="left:44.6px;top:0;width:49.9px">10007</div>
<div class="cell" style="left:98.9px;top:0;width:68.1px"><u>10007-1041-01</u></div>
<div class="cell" style="left:168px;top:0;width:32.2px;text-align:right">1</div>
<div class="abs" style="left:195.1px;top:11.1px;width:3.5px;height:0.75px;background:#5a5e62"></div>
<div class="cell" style="left:206.20000000000002px;top:0;width:49.1px">BEARB</div>
<div class="cell" style="left:259.7px;top:0;width:68.6px">20.05.2018</div>
<div class="abs" style="left:330px;top:0;width:34px;height:15.63px"><svg class="ic" width="10" height="12" viewBox="0 0 10 12" style="left:13px;top:2px"><path d="M1.7 1.4 L1.7 10.4" stroke="#32363a" stroke-width="0.9"/><path d="M1.7 1.5 L6.8 1.9 L6.8 5.9 L1.7 5.6 Z" fill="#32363a"/><path d="M2.5 2.2 h1.5 v1.6 h-1.5z M4.4 3.8 h1.6 v1.5 h-1.6z" fill="#fff" opacity="0.8"/></svg></div>
<div class="cell" style="left:367.4px;top:0;width:149.1px">Mahntelefonat Mieter erreicht</div>
<div class="cell" style="left:520.9px;top:0;width:156.1px">Mahntelefonat Mieter erreicht</div>
<div class="cell" style="left:681.4px;top:0;width:299.6px">Wechsel der Bank führte zu einer fehlbuchung. Zahlung wurde zugesagt.</div>
</div>
<div class="row" style="left:30px;top:339.13px;width:1123.5px;background:#ffffff">
<div class="cell" style="left:3.4px;top:0;width:36.800000000000004px">1000</div>
<div class="cell" style="left:44.6px;top:0;width:49.9px">10007</div>
<div class="cell" style="left:168px;top:0;width:32.2px;text-align:right">1</div>
<div class="abs" style="left:195.1px;top:11.1px;width:3.5px;height:0.75px;background:#5a5e62"></div>
<div class="cell" style="left:206.20000000000002px;top:0;width:49.1px">BEARB</div>
<div class="cell" style="left:259.7px;top:0;width:68.6px">18.05.2018</div>
<div class="abs" style="left:330px;top:0;width:34px;height:15.63px"><svg class="ic" width="10" height="12" viewBox="0 0 10 12" style="left:13px;top:2px"><path d="M1.7 1.4 L1.7 10.4" stroke="#1b6ac9" stroke-width="0.9"/><path d="M1.7 1.5 L6.8 1.9 L6.8 5.9 L1.7 5.6 Z" fill="#1b6ac9"/><path d="M2.5 2.2 h1.5 v1.6 h-1.5z M4.4 3.8 h1.6 v1.5 h-1.6z" fill="#fff" opacity="0.8"/></svg></div>
<div class="cell" style="left:367.4px;top:0;width:149.1px">Mahntelefonat Mieter nicht erreicht</div>
<div class="cell" style="left:520.9px;top:0;width:156.1px">Mahntelefonat Mieter nicht erreicht</div>
<div class="cell" style="left:681.4px;top:0;width:299.6px">Versuche es noch mal.</div>
</div>
<div class="row" style="left:30px;top:354.76000000000005px;width:1123.5px;background:#e7eaee">
<div class="cell" style="left:3.4px;top:0;width:36.800000000000004px">1000</div>
<div class="cell" style="left:44.6px;top:0;width:49.9px">10007</div>
<div class="cell" style="left:168px;top:0;width:32.2px;text-align:right">1</div>
<div class="abs" style="left:195.1px;top:11.1px;width:3.5px;height:0.75px;background:#5a5e62"></div>
<div class="cell" style="left:206.20000000000002px;top:0;width:49.1px">BEARB</div>
<div class="cell" style="left:259.7px;top:0;width:68.6px">20.05.2018</div>
<div class="abs" style="left:330px;top:0;width:34px;height:15.63px"><svg class="ic" width="12" height="12" viewBox="0 0 12 12" style="left:11.5px;top:1.9px"><path d="M0.8 4.4 L4.3 0.9 L4.3 4.4 Z" fill="#3a3e42"/><path d="M4.3 1.3 H8.1 V4.8 M1.3 4.4 V9.9 H5.6" fill="none" stroke="#3a3e42" stroke-width="0.9"/><path d="M3.4 9.2 L5.6 5.2" fill="none" stroke="#3a3e42" stroke-width="0.8" opacity="0.8"/><path d="M7.6 5.6 L10.4 8.2 L8.4 10.4 L6.3 8.2 Z" fill="none" stroke="#3a3e42" stroke-width="0.85" opacity="0.85"/></svg></div>
<div class="cell" style="left:367.4px;top:0;width:149.1px">Mahntelefonat Mieter nicht erreicht</div>
<div class="cell" style="left:520.9px;top:0;width:156.1px">Mahntelefonat Mieter erreicht</div>
</div>
<div class="row" style="left:30px;top:370.39000000000004px;width:1123.5px;background:#ffffff">
<div class="cell" style="left:3.4px;top:0;width:36.800000000000004px">1000</div>
<div class="cell" style="left:44.6px;top:0;width:49.9px">10007</div>
<div class="cell" style="left:168px;top:0;width:32.2px;text-align:right">1</div>
<div class="abs" style="left:195.1px;top:11.1px;width:3.5px;height:0.75px;background:#5a5e62"></div>
<div class="cell" style="left:206.20000000000002px;top:0;width:49.1px">BEARB</div>
<div class="cell" style="left:259.7px;top:0;width:68.6px">18.05.2020</div>
<div class="abs" style="left:330px;top:0;width:34px;height:15.63px"><svg class="ic" width="12" height="12" viewBox="0 0 12 12" style="left:11.5px;top:1.9px"><path d="M0.8 4.4 L4.3 0.9 L4.3 4.4 Z" fill="#2b6fc4"/><path d="M4.3 1.3 H8.1 V4.8 M1.3 4.4 V9.9 H5.6" fill="none" stroke="#2b6fc4" stroke-width="0.9"/><path d="M3.4 9.2 L5.6 5.2" fill="none" stroke="#2b6fc4" stroke-width="0.8" opacity="0.8"/><path d="M7.6 5.6 L10.4 8.2 L8.4 10.4 L6.3 8.2 Z" fill="none" stroke="#2b6fc4" stroke-width="0.85" opacity="0.85"/></svg></div>
<div class="cell" style="left:367.4px;top:0;width:149.1px">Mahntelefonat Mieter nicht erreicht</div>
<div class="cell" style="left:520.9px;top:0;width:156.1px">Mahntelefonat: Mieter nicht erreicht</div>
</div>
<div class="row" style="left:30px;top:386.02000000000004px;width:1123.5px;background:#e7eaee">
<div class="cell" style="left:3.4px;top:0;width:36.800000000000004px">1000</div>
<div class="cell" style="left:44.6px;top:0;width:49.9px">10007</div>
<div class="cell" style="left:98.9px;top:0;width:68.1px"><u>10007-1004-02</u></div>
<div class="cell" style="left:168px;top:0;width:32.2px;text-align:right">1</div>
<div class="abs" style="left:195.1px;top:11.1px;width:3.5px;height:0.75px;background:#5a5e62"></div>
<div class="cell" style="left:206.20000000000002px;top:0;width:49.1px">BEARB</div>
<div class="cell" style="left:259.7px;top:0;width:68.6px">10.10.2020</div>
<div class="abs" style="left:330px;top:0;width:34px;height:15.63px"><svg class="ic" width="10" height="12" viewBox="0 0 10 12" style="left:13px;top:2px"><path d="M1.7 1.4 L1.7 10.4" stroke="#32363a" stroke-width="0.9"/><path d="M1.7 1.5 L6.8 1.9 L6.8 5.9 L1.7 5.6 Z" fill="#32363a"/><path d="M2.5 2.2 h1.5 v1.6 h-1.5z M4.4 3.8 h1.6 v1.5 h-1.6z" fill="#fff" opacity="0.8"/></svg></div>
<div class="cell" style="left:367.4px;top:0;width:149.1px">Mahntelefonat Mieter nicht erreicht</div>
<div class="cell" style="left:520.9px;top:0;width:156.1px">Mahntelefonat</div>
<div class="cell" style="left:681.4px;top:0;width:299.6px">Mahntgelefonat durchgeführt, Überweisung für den 12.10. zugesagt</div>
<div class="cell" style="left:1082.9px;top:0;width:40.6px">10/2020, 1</div>
</div>
<div class="row" style="left:30px;top:401.65000000000003px;width:1123.5px;background:#ffffff">
<div class="cell" style="left:3.4px;top:0;width:36.800000000000004px">1000</div>
<div class="cell" style="left:44.6px;top:0;width:49.9px">10007</div>
<div class="cell" style="left:168px;top:0;width:32.2px;text-align:right">1</div>
<div class="abs" style="left:195.1px;top:11.1px;width:3.5px;height:0.75px;background:#5a5e62"></div>
<div class="cell" style="left:206.20000000000002px;top:0;width:49.1px">BEARB</div>
<div class="cell" style="left:259.7px;top:0;width:68.6px">13.10.2020</div>
<div class="abs" style="left:330px;top:0;width:34px;height:15.63px"><svg class="ic" width="12" height="12" viewBox="0 0 12 12" style="left:11.5px;top:1.9px"><path d="M0.8 4.4 L4.3 0.9 L4.3 4.4 Z" fill="#2b6fc4"/><path d="M4.3 1.3 H8.1 V4.8 M1.3 4.4 V9.9 H5.6" fill="none" stroke="#2b6fc4" stroke-width="0.9"/><path d="M3.4 9.2 L5.6 5.2" fill="none" stroke="#2b6fc4" stroke-width="0.8" opacity="0.8"/><path d="M7.6 5.6 L10.4 8.2 L8.4 10.4 L6.3 8.2 Z" fill="none" stroke="#2b6fc4" stroke-width="0.85" opacity="0.85"/></svg></div>
<div class="cell" style="left:367.4px;top:0;width:149.1px">Abmahnung</div>
<div class="cell" style="left:520.9px;top:0;width:156.1px">Abmahnung</div>
<div class="cell" style="left:681.4px;top:0;width:299.6px">Abmahnung ausgesprochen</div>
<div class="cell" style="left:1082.9px;top:0;width:40.6px">10/2020, 1</div>
</div>
<div class="row" style="left:30px;top:417.28000000000003px;width:1123.5px;background:#e7eaee">
<div class="cell" style="left:3.4px;top:0;width:36.800000000000004px">1000</div>
<div class="cell" style="left:44.6px;top:0;width:49.9px">10007</div>
<div class="cell" style="left:168px;top:0;width:32.2px;text-align:right">1</div>
<div class="abs" style="left:195.1px;top:11.1px;width:3.5px;height:0.75px;background:#5a5e62"></div>
<div class="cell" style="left:206.20000000000002px;top:0;width:49.1px">BEARB</div>
<div class="cell" style="left:259.7px;top:0;width:68.6px">25.10.2020</div>
<div class="abs" style="left:330px;top:0;width:34px;height:15.63px"><svg class="ic" width="10" height="12" viewBox="0 0 10 12" style="left:13px;top:2px"><path d="M1.7 1.4 L1.7 10.4" stroke="#32363a" stroke-width="0.9"/><path d="M1.7 1.5 L6.8 1.9 L6.8 5.9 L1.7 5.6 Z" fill="#32363a"/><path d="M2.5 2.2 h1.5 v1.6 h-1.5z M4.4 3.8 h1.6 v1.5 h-1.6z" fill="#fff" opacity="0.8"/></svg></div>
<div class="cell" style="left:367.4px;top:0;width:149.1px">Ratenzahlungsvereinbarung</div>
<div class="cell" style="left:520.9px;top:0;width:156.1px">Ratenzahlung vereinbart</div>
<div class="cell" style="left:1082.9px;top:0;width:40.6px">10/2020, 1</div>
</div>
<div class="row" style="left:30px;top:432.91px;width:1123.5px;background:#ffffff">
<div class="cell" style="left:3.4px;top:0;width:36.800000000000004px">1000</div>
<div class="cell" style="left:44.6px;top:0;width:49.9px">10007</div>
<div class="cell" style="left:168px;top:0;width:32.2px;text-align:right">1</div>
<div class="abs" style="left:195.1px;top:11.1px;width:3.5px;height:0.75px;background:#5a5e62"></div>
<div class="cell" style="left:206.20000000000002px;top:0;width:49.1px">BEARB</div>
<div class="cell" style="left:259.7px;top:0;width:68.6px">05.11.2020</div>
<div class="abs" style="left:330px;top:0;width:34px;height:15.63px"><svg class="ic" width="12" height="12" viewBox="0 0 12 12" style="left:11.5px;top:1.9px"><path d="M0.8 4.4 L4.3 0.9 L4.3 4.4 Z" fill="#2b6fc4"/><path d="M4.3 1.3 H8.1 V4.8 M1.3 4.4 V9.9 H5.6" fill="none" stroke="#2b6fc4" stroke-width="0.9"/><path d="M3.4 9.2 L5.6 5.2" fill="none" stroke="#2b6fc4" stroke-width="0.8" opacity="0.8"/><path d="M7.6 5.6 L10.4 8.2 L8.4 10.4 L6.3 8.2 Z" fill="none" stroke="#2b6fc4" stroke-width="0.85" opacity="0.85"/></svg></div>
<div class="cell" style="left:367.4px;top:0;width:149.1px">1. Fristlose Kündigung</div>
<div class="cell" style="left:520.9px;top:0;width:156.1px">Fristlose Kündigung ausgesprochen</div>
<div class="cell" style="left:1082.9px;top:0;width:40.6px">10/2020, 1</div>
</div>
<div class="row" style="left:30px;top:448.54px;width:1123.5px;background:#e7eaee">
<div class="cell" style="left:3.4px;top:0;width:36.800000000000004px">1000</div>
<div class="cell" style="left:44.6px;top:0;width:49.9px">10007</div>
<div class="cell" style="left:168px;top:0;width:32.2px;text-align:right">1</div>
<div class="abs" style="left:195.1px;top:11.1px;width:3.5px;height:0.75px;background:#5a5e62"></div>
<div class="cell" style="left:206.20000000000002px;top:0;width:49.1px">BEARB</div>
<div class="cell" style="left:259.7px;top:0;width:68.6px">08.12.2020</div>
<div class="abs" style="left:330px;top:0;width:34px;height:15.63px"><svg class="ic" width="12" height="12" viewBox="0 0 12 12" style="left:11px;top:1.8px"><circle cx="6.5" cy="6.2" r="3.75" fill="none" stroke="#dc3a42" stroke-width="1.05"/></svg></div>
<div class="cell" style="left:367.4px;top:0;width:149.1px">Räumungstermin</div>
<div class="cell" style="left:520.9px;top:0;width:156.1px">Räumungstermin</div>
<div class="cell" style="left:1082.9px;top:0;width:40.6px">10/2020, 1</div>
</div>
<div class="row" style="left:30px;top:464.17px;width:1123.5px;background:#ffffff">
<div class="cell" style="left:3.4px;top:0;width:36.800000000000004px">1000</div>
<div class="cell" style="left:44.6px;top:0;width:49.9px">10007</div>
<div class="cell" style="left:168px;top:0;width:32.2px;text-align:right">2</div>
<div class="cell" style="left:206.20000000000002px;top:0;width:49.1px">ANG</div>
</div>
<div class="row" style="left:30px;top:479.8px;width:1123.5px;background:#e7eaee">
<div class="cell" style="left:3.4px;top:0;width:36.800000000000004px">1000</div>
<div class="cell" style="left:44.6px;top:0;width:49.9px">10007</div>
<div class="cell" style="left:98.9px;top:0;width:68.1px"><u>10007-1004-01</u></div>
<div class="cell" style="left:168px;top:0;width:32.2px;text-align:right">1</div>
<div class="abs" style="left:195.1px;top:11.1px;width:3.5px;height:0.75px;background:#5a5e62"></div>
<div class="cell" style="left:206.20000000000002px;top:0;width:49.1px">BEARB</div>
<div class="cell" style="left:259.7px;top:0;width:68.6px">20.08.2019</div>
<div class="abs" style="left:330px;top:0;width:34px;height:15.63px"><svg class="ic" width="12" height="12" viewBox="0 0 12 12" style="left:11px;top:1.8px"><circle cx="6.5" cy="6.2" r="3.75" fill="none" stroke="#dc3a42" stroke-width="1.05"/></svg></div>
<div class="cell" style="left:367.4px;top:0;width:149.1px">Mahntelefonat Mieter erreicht</div>
</div>
<div class="row" style="left:30px;top:495.43px;width:1123.5px;background:#ffffff">
<div class="cell" style="left:3.4px;top:0;width:36.800000000000004px">1000</div>
<div class="cell" style="left:44.6px;top:0;width:49.9px">10003</div>
<div class="cell" style="left:98.9px;top:0;width:68.1px"><u>10003-1002-01</u></div>
<div class="cell" style="left:168px;top:0;width:32.2px;text-align:right">1</div>
<div class="abs" style="left:195.1px;top:11.1px;width:3.5px;height:0.75px;background:#5a5e62"></div>
<div class="cell" style="left:206.20000000000002px;top:0;width:49.1px">ANG</div>
</div>
<div class="row" style="left:30px;top:511.06000000000006px;width:1123.5px;background:#e7eaee">
<div class="cell" style="left:3.4px;top:0;width:36.800000000000004px">1000</div>
<div class="cell" style="left:44.6px;top:0;width:49.9px">10003</div>
<div class="cell" style="left:168px;top:0;width:32.2px;text-align:right">2</div>
<div class="cell" style="left:206.20000000000002px;top:0;width:49.1px">ANG</div>
</div>
<div class="row" style="left:30px;top:526.69px;width:1123.5px;background:#ffffff">
<div class="cell" style="left:3.4px;top:0;width:36.800000000000004px">1000</div>
<div class="cell" style="left:44.6px;top:0;width:49.9px">10003</div>
<div class="cell" style="left:168px;top:0;width:32.2px;text-align:right">3</div>
<div class="cell" style="left:206.20000000000002px;top:0;width:49.1px">ENDE</div>
<div class="cell" style="left:259.7px;top:0;width:68.6px">01.02.2017</div>
<div class="abs" style="left:330px;top:0;width:34px;height:15.63px"><svg class="ic" width="12" height="12" viewBox="0 0 12 12" style="left:11.5px;top:1.9px"><path d="M0.8 4.4 L4.3 0.9 L4.3 4.4 Z" fill="#2b6fc4"/><path d="M4.3 1.3 H8.1 V4.8 M1.3 4.4 V9.9 H5.6" fill="none" stroke="#2b6fc4" stroke-width="0.9"/><path d="M3.4 9.2 L5.6 5.2" fill="none" stroke="#2b6fc4" stroke-width="0.8" opacity="0.8"/><path d="M7.6 5.6 L10.4 8.2 L8.4 10.4 L6.3 8.2 Z" fill="none" stroke="#2b6fc4" stroke-width="0.85" opacity="0.85"/></svg></div>
<div class="cell" style="left:367.4px;top:0;width:149.1px">Mahntelefonat Mieter nicht erreicht</div>
<div class="cell" style="left:520.9px;top:0;width:156.1px">Mieter ist nicht erreichbar</div>
<div class="cell" style="left:681.4px;top:0;width:299.6px">Telefonnummer überprüfen</div>
<div class="cell" style="left:985.4px;top:0;width:93.1px">Test ABC</div>
<div class="cell" style="left:1082.9px;top:0;width:40.6px">ZAHLUNG</div>
</div>
<div class="row" style="left:30px;top:542.32px;width:1123.5px;background:#e7eaee">
<div class="cell" style="left:3.4px;top:0;width:36.800000000000004px">1000</div>
<div class="cell" style="left:44.6px;top:0;width:49.9px">10003</div>
<div class="cell" style="left:168px;top:0;width:32.2px;text-align:right">3</div>
<div class="cell" style="left:206.20000000000002px;top:0;width:49.1px">ENDE</div>
<div class="cell" style="left:259.7px;top:0;width:68.6px">03.02.2017</div>
<div class="abs" style="left:330px;top:0;width:34px;height:15.63px"><svg class="ic" width="12" height="12" viewBox="0 0 12 12" style="left:11.5px;top:1.9px"><path d="M0.8 4.4 L4.3 0.9 L4.3 4.4 Z" fill="#3a3e42"/><path d="M4.3 1.3 H8.1 V4.8 M1.3 4.4 V9.9 H5.6" fill="none" stroke="#3a3e42" stroke-width="0.9"/><path d="M3.4 9.2 L5.6 5.2" fill="none" stroke="#3a3e42" stroke-width="0.8" opacity="0.8"/><path d="M7.6 5.6 L10.4 8.2 L8.4 10.4 L6.3 8.2 Z" fill="none" stroke="#3a3e42" stroke-width="0.85" opacity="0.85"/></svg></div>
<div class="cell" style="left:367.4px;top:0;width:149.1px">Mahntelefonat Mieter erreicht</div>
<div class="cell" style="left:520.9px;top:0;width:156.1px">Mieter erreicht - Klärung offener Saldo</div>
<div class="cell" style="left:681.4px;top:0;width:299.6px">Betrag wird in 3 Raten gezahlt</div>
<div class="cell" style="left:985.4px;top:0;width:93.1px">Test ABC</div>
<div class="cell" style="left:1082.9px;top:0;width:40.6px">ZAHLUNG</div>
</div>
<div class="row" style="left:30px;top:557.95px;width:1123.5px;background:#ffffff">
<div class="cell" style="left:3.4px;top:0;width:36.800000000000004px">1000</div>
<div class="cell" style="left:44.6px;top:0;width:49.9px">10003</div>
<div class="cell" style="left:168px;top:0;width:32.2px;text-align:right">3</div>
<div class="cell" style="left:206.20000000000002px;top:0;width:49.1px">ENDE</div>
<div class="cell" style="left:259.7px;top:0;width:68.6px">03.02.2017</div>
<div class="abs" style="left:330px;top:0;width:34px;height:15.63px"><svg class="ic" width="12" height="12" viewBox="0 0 12 12" style="left:11.5px;top:1.9px"><path d="M0.8 4.4 L4.3 0.9 L4.3 4.4 Z" fill="#2b6fc4"/><path d="M4.3 1.3 H8.1 V4.8 M1.3 4.4 V9.9 H5.6" fill="none" stroke="#2b6fc4" stroke-width="0.9"/><path d="M3.4 9.2 L5.6 5.2" fill="none" stroke="#2b6fc4" stroke-width="0.8" opacity="0.8"/><path d="M7.6 5.6 L10.4 8.2 L8.4 10.4 L6.3 8.2 Z" fill="none" stroke="#2b6fc4" stroke-width="0.85" opacity="0.85"/></svg></div>
<div class="cell" style="left:367.4px;top:0;width:149.1px">Ratenzahlungsvereinbarung</div>
<div class="cell" style="left:520.9px;top:0;width:156.1px">Vereinbarung von 3 Raten</div>
<div class="cell" style="left:681.4px;top:0;width:299.6px">Schriftgut wurde bereits zur Unterschrift versandt.</div>
<div class="cell" style="left:985.4px;top:0;width:93.1px">Test ABC</div>
<div class="cell" style="left:1082.9px;top:0;width:40.6px">ZAHLUNG</div>
</div>
<div class="row" style="left:30px;top:573.58px;width:1123.5px;background:#e7eaee">
<div class="cell" style="left:3.4px;top:0;width:36.800000000000004px">1000</div>
<div class="cell" style="left:44.6px;top:0;width:49.9px">10003</div>
<div class="cell" style="left:168px;top:0;width:32.2px;text-align:right">3</div>
<div class="cell" style="left:206.20000000000002px;top:0;width:49.1px">ENDE</div>
<div class="cell" style="left:259.7px;top:0;width:68.6px">01.03.2017</div>
<div class="abs" style="left:330px;top:0;width:34px;height:15.63px"><svg class="ic" width="12" height="12" viewBox="0 0 12 12" style="left:11.5px;top:1.9px"><path d="M0.8 4.4 L4.3 0.9 L4.3 4.4 Z" fill="#3a3e42"/><path d="M4.3 1.3 H8.1 V4.8 M1.3 4.4 V9.9 H5.6" fill="none" stroke="#3a3e42" stroke-width="0.9"/><path d="M3.4 9.2 L5.6 5.2" fill="none" stroke="#3a3e42" stroke-width="0.8" opacity="0.8"/><path d="M7.6 5.6 L10.4 8.2 L8.4 10.4 L6.3 8.2 Z" fill="none" stroke="#3a3e42" stroke-width="0.85" opacity="0.85"/></svg></div>
<div class="cell" style="left:367.4px;top:0;width:149.1px">Abmahnung</div>
<div class="cell" style="left:520.9px;top:0;width:156.1px">Mieter hat 1. Rate nicht gezahlt</div>
<div class="cell" style="left:985.4px;top:0;width:93.1px">Test ABC</div>
<div class="cell" style="left:1082.9px;top:0;width:40.6px">ZAHLUNG</div>
</div>
<div class="row" style="left:30px;top:589.21px;width:1123.5px;background:#ffffff">
<div class="cell" style="left:3.4px;top:0;width:36.800000000000004px">1000</div>
<div class="cell" style="left:44.6px;top:0;width:49.9px">10003</div>
<div class="cell" style="left:98.9px;top:0;width:68.1px"><u>10003-1001-02</u></div>
<div class="cell" style="left:168px;top:0;width:32.2px;text-align:right">1</div>
<div class="abs" style="left:195.1px;top:11.1px;width:3.5px;height:0.75px;background:#5a5e62"></div>
<div class="cell" style="left:206.20000000000002px;top:0;width:49.1px">ENDE</div>
<div class="cell" style="left:259.7px;top:0;width:68.6px">12.05.2020</div>
<div class="abs" style="left:330px;top:0;width:34px;height:15.63px"><svg class="ic" width="12" height="12" viewBox="0 0 12 12" style="left:11px;top:1.8px"><circle cx="6.5" cy="6.2" r="3.75" fill="none" stroke="#dc3a42" stroke-width="1.05"/></svg></div>
<div class="cell" style="left:367.4px;top:0;width:149.1px">Mahntelefonat Mieter nicht erreicht</div>
<div class="cell" style="left:681.4px;top:0;width:299.6px">Telefonat am 01.03.2020</div>
</div>
<div class="row" style="left:30px;top:604.84px;width:1123.5px;background:#e7eaee">
<div class="cell" style="left:3.4px;top:0;width:36.800000000000004px">1000</div>
<div class="cell" style="left:44.6px;top:0;width:49.9px">10003</div>
<div class="cell" style="left:168px;top:0;width:32.2px;text-align:right">1</div>
<div class="abs" style="left:195.1px;top:11.1px;width:3.5px;height:0.75px;background:#5a5e62"></div>
<div class="cell" style="left:206.20000000000002px;top:0;width:49.1px">ENDE</div>
<div class="cell" style="left:259.7px;top:0;width:68.6px">31.12.2020</div>
<div class="abs" style="left:330px;top:0;width:34px;height:15.63px"><svg class="ic" width="12" height="12" viewBox="0 0 12 12" style="left:11.5px;top:1.9px"><path d="M0.8 4.4 L4.3 0.9 L4.3 4.4 Z" fill="#3a3e42"/><path d="M4.3 1.3 H8.1 V4.8 M1.3 4.4 V9.9 H5.6" fill="none" stroke="#3a3e42" stroke-width="0.9"/><path d="M3.4 9.2 L5.6 5.2" fill="none" stroke="#3a3e42" stroke-width="0.8" opacity="0.8"/><path d="M7.6 5.6 L10.4 8.2 L8.4 10.4 L6.3 8.2 Z" fill="none" stroke="#3a3e42" stroke-width="0.85" opacity="0.85"/></svg></div>
<div class="cell" style="left:367.4px;top:0;width:149.1px">Schließung der Mahn- und Klageakte</div>
<div class="cell" style="left:520.9px;top:0;width:156.1px">Schließung</div>
</div>
<div class="row" style="left:30px;top:620.47px;width:1123.5px;background:#ffffff">
<div class="cell" style="left:3.4px;top:0;width:36.800000000000004px">1000</div>
<div class="cell" style="left:44.6px;top:0;width:49.9px">10003</div>
<div class="cell" style="left:168px;top:0;width:32.2px;text-align:right">2</div>
<div class="cell" style="left:206.20000000000002px;top:0;width:49.1px">BEARB</div>
<div class="cell" style="left:259.7px;top:0;width:68.6px">10.03.2021</div>
<div class="abs" style="left:330px;top:0;width:34px;height:15.63px"><svg class="ic" width="10" height="12" viewBox="0 0 10 12" style="left:13px;top:2px"><path d="M1.7 1.4 L1.7 10.4" stroke="#1b6ac9" stroke-width="0.9"/><path d="M1.7 1.5 L6.8 1.9 L6.8 5.9 L1.7 5.6 Z" fill="#1b6ac9"/><path d="M2.5 2.2 h1.5 v1.6 h-1.5z M4.4 3.8 h1.6 v1.5 h-1.6z" fill="#fff" opacity="0.8"/></svg></div>
<div class="cell" style="left:367.4px;top:0;width:149.1px">Gerichtliches Mahnverfahren</div>
<div class="cell" style="left:520.9px;top:0;width:156.1px">Gerichtliches Mahnverfahren eingeleitet</div>
</div>
<div class="vl" style="left:70.7px;top:89.05px;height:547.0500000000001px;background:rgba(0,0,0,0.055)"></div>
<div class="vl" style="left:125.0px;top:89.05px;height:547.0500000000001px;background:rgba(0,0,0,0.055)"></div>
<div class="vl" style="left:197.5px;top:89.05px;height:547.0500000000001px;background:rgba(0,0,0,0.055)"></div>
<div class="vl" style="left:233.0px;top:89.05px;height:547.0500000000001px;background:rgba(0,0,0,0.055)"></div>
<div class="vl" style="left:286.5px;top:89.05px;height:547.0500000000001px;background:rgba(0,0,0,0.055)"></div>
<div class="vl" style="left:359.5px;top:89.05px;height:547.0500000000001px;background:rgba(0,0,0,0.055)"></div>
<div class="vl" style="left:393.5px;top:89.05px;height:547.0500000000001px;background:rgba(0,0,0,0.055)"></div>
<div class="vl" style="left:547.0px;top:89.05px;height:547.0500000000001px;background:rgba(0,0,0,0.055)"></div>
<div class="vl" style="left:707.5px;top:89.05px;height:547.0500000000001px;background:rgba(0,0,0,0.055)"></div>
<div class="vl" style="left:1011.5px;top:89.05px;height:547.0500000000001px;background:rgba(0,0,0,0.055)"></div>
<div class="vl" style="left:1109.0px;top:89.05px;height:547.0500000000001px;background:rgba(0,0,0,0.055)"></div>
<div class="vl" style="left:29.5px;top:68.0px;height:568.1px;background:#e2e2e2"></div>
<div class="vl" style="left:1161.0px;top:68.0px;height:576.1px;background:#dcdcdc"></div>
<div class="vl" style="left:1153.0px;top:89.05px;height:555.0500000000001px;background:#eeeeee"></div>
<div class="abs" style="left:1153.8px;top:89.6px;width:7.2px;height:327.3px;background:#929292;border-radius:2px 2px 0 0"></div>
<div class="abs" style="left:30px;top:635.6px;width:1131.5px;height:1px;background:#e5e5e5"></div>
<div class="abs" style="left:30px;top:643.7px;width:1130.0px;height:1px;background:#dedede"></div>
<div class="abs" style="left:31px;top:636.4px;width:593.5px;height:7.6px;background:#929292;border-radius:1.5px"></div>
<div class="abs" style="left:0;top:652.5px;width:1200px;height:2px;background:#fafafa"></div>
</body></html>
